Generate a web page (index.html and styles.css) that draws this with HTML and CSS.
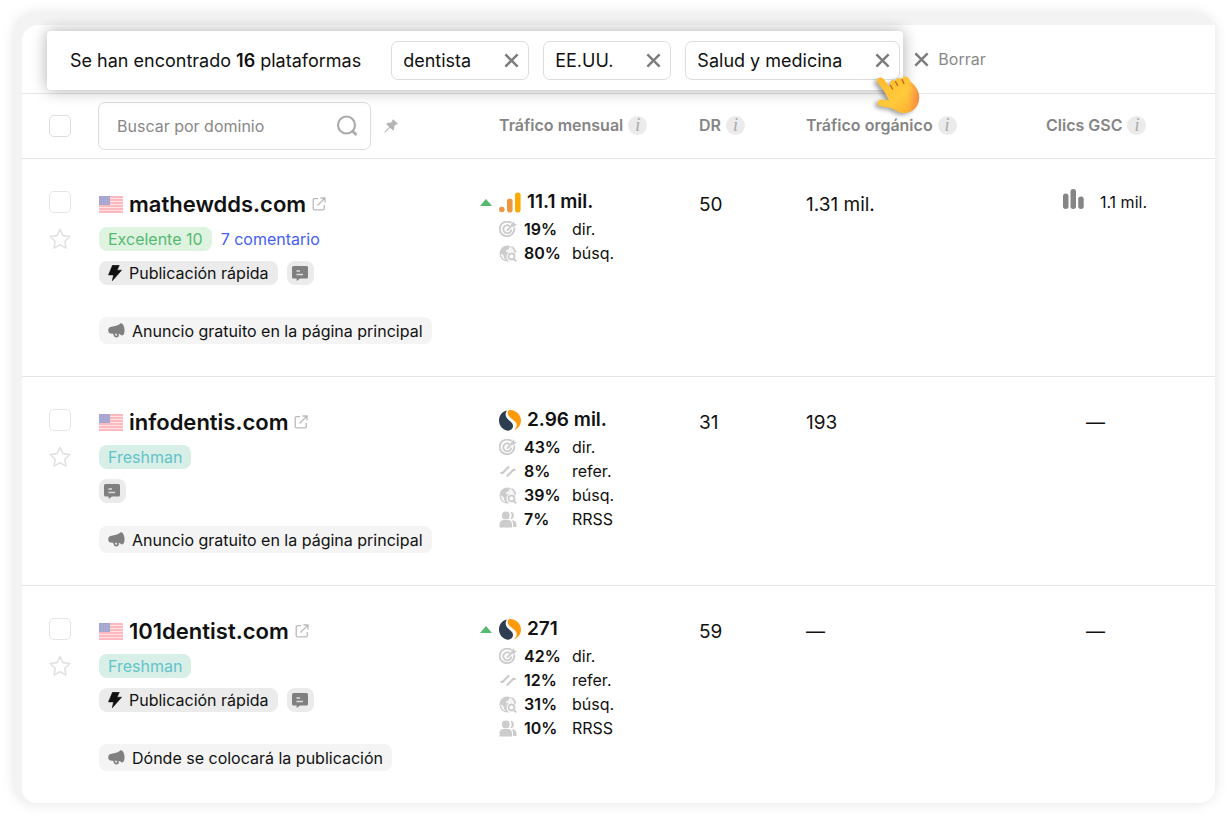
FILE: index.html
```html
<!DOCTYPE html>
<html lang="es">
  <head>
    <meta charset="UTF-8" />
    <meta name="viewport" content="width=device-width, initial-scale=1.0" />
    <title>Plataformas</title>
    <link rel="stylesheet" href="styles.css">
  </head>
  <body>
    <!-- Icon set -->
    <svg class="sprite" aria-hidden="true">
      <symbol id="i-close" viewBox="0 0 18 18">
        <path d="M2.5 2.5l13 13M15.5 2.5l-13 13" fill="none" stroke="currentColor" stroke-width="2.6" />
      </symbol>
      <symbol id="i-search" viewBox="0 0 22 22">
        <circle cx="10.500" cy="10" r="8.500" fill="none" stroke="currentColor" stroke-width="2.1" />
        <path d="M16.500 16l4 4" stroke="currentColor" stroke-width="2.6" />
      </symbol>
      <symbol id="i-pin" viewBox="0 0 14 14">
        <path d="M9.300.2l4.500 4.500c-.5.800-1.200 1.100-2 .9l-1.600 1.700c.4 1.800 0 3.200-1.100 4.300L6 8.700 1 13.700l-.7-.7L5.200 8 2.200 5c1-1.200 2.500-1.600 4.300-1.200L8.300 2.200C8.100 1.400 8.500.7 9.300.2z" fill="currentColor" />
      </symbol>
      <symbol id="i-star" viewBox="0 0 22 22">
        <path d="M11 1.300l2.900 6.300 6.900.9-5 4.800 1.200 6.800-6-3.300-6 3.300 1.200-6.800-5-4.800 6.900-.9z" fill="none" stroke="currentColor" stroke-width="1.600" stroke-linejoin="round" />
      </symbol>
      <symbol id="i-flag" viewBox="0 0 24 17">
        <rect width="24" height="17" fill="#ffb9be" />
        <path d="M0 2.500h24M0 5.500h24M0 8.500h24M0 11.500h24M0 14.500h24" stroke="#fff" stroke-opacity=".6" stroke-width="1" />
        <rect width="11" height="9" fill="#a5a5d0" />
        <path d="M1 2h9M1 4.500h9M1 7h9" stroke="#b9b9dc" stroke-width=".8" stroke-dasharray="1 1" />
      </symbol>
      <symbol id="i-external" viewBox="0 0 14 14">
        <path d="M6 1.700H2.500A1.300 1.300 0 0 0 1.200 3v8.500a1.300 1.300 0 0 0 1.300 1.300H11a1.300 1.300 0 0 0 1.300-1.300V8M8.500 1H13v4.500M13 1L5.500 8.500" fill="none" stroke="currentColor" stroke-width="1.300" />
      </symbol>
      <symbol id="i-bolt" viewBox="0 0 14 16">
        <path d="M4.500.3h6.800L9 5.200h4.600L4.300 15.800l1.300-5.900H.5z" fill="currentColor" stroke="currentColor" stroke-width=".6" stroke-linejoin="round" />
      </symbol>
      <symbol id="i-comment" viewBox="0 0 16 15">
        <path d="M1.500 0h13A1.500 1.500 0 0 1 16 1.500v9.500a1.500 1.500 0 0 1-1.500 1.500H8L4.700 15v-2.500H1.500A1.500 1.500 0 0 1 0 11V1.500A1.500 1.500 0 0 1 1.500 0z" fill="currentColor" />
        <path d="M4.500 5H8M4.500 8.500h6.500" stroke="#dcdcdc" stroke-width="1.300" />
      </symbol>
      <symbol id="i-horn" viewBox="0 0 17 15">
        <path d="M12.500.3c2-.6 3.700 2.400 4 6 .3 3.500-.8 6.200-2.700 6.200-1-.9-2-1.400-3.200-1.700l.3 2.200c-1 1.500-2.900 1.900-4.400 1L5 10.700l-2.500-.2C1.100 10.400.2 9.100.2 7.300.2 5.600 1 4.200 2.400 3.900l4.800-1C9.400 2.500 11 1.600 12.500.3z" fill="currentColor" />
        <path d="M6.700 10.800l1.200 2 1.200-.4-.5-1.700z" fill="#f4f4f4" />
      </symbol>
      <symbol id="i-analytics" viewBox="0 0 22 20">
        <circle cx="2.800" cy="17" r="2.800" fill="#ee9743" />
        <rect x="8" y="6" width="5.600" height="14" rx="2.800" fill="#ee9743" />
        <rect x="16" y="0" width="5.600" height="20" rx="2.800" fill="#fdab03" />
      </symbol>
      <symbol id="i-similar" viewBox="0 0 22 21">
        <path d="M8 .5C3 1.500 0 5.600 0 10.500c0 5.500 4 9.800 9.500 10.300 3-.7 4.700-2.700 4.500-5.200-.3-2.600-2.200-4-4.300-5.600C7.200 8.100 5.200 4.300 8 .5z" fill="#2d3e52" />
        <path d="M10.500 0C16.800-.2 22 4.600 22 10.500c0 4.500-2.900 8.300-7 9.800 2.900-2.500 3.600-5.600 1.500-8.300-1.700-2.200-5-3.500-6.900-6.300C8.100 3.500 8.500.7 10.500 0z" fill="#ff9a0a" />
      </symbol>
      <symbol id="i-target" viewBox="0 0 18 17">
        <path d="M12.500 2.100A7.300 7.300 0 1 0 15.200 6.500M10.800 5.200A4 4 0 1 0 12.300 8.500" fill="none" stroke="currentColor" stroke-width="1.900" />
        <path d="M8.500 9l5-5" stroke="currentColor" stroke-width="1.800" stroke-linecap="round" />
        <path d="M12 3.300L14.800.3l.6 2.300 2.300.6-2.900 2.800-2.300-.3z" fill="currentColor" />
      </symbol>
      <symbol id="i-refer" viewBox="0 0 18 17">
        <path d="M2.300 9.800h1.500L9.500 4M8.500 12.800l5.700-5.900h1.500" fill="none" stroke="currentColor" stroke-width="2.200" stroke-linecap="round" stroke-linejoin="round" />
      </symbol>
      <symbol id="i-globe" viewBox="0 0 18 17">
        <circle cx="8.500" cy="8.500" r="8" fill="currentColor" />
        <path d="M9 1.800l2.300 1.400-.8 2.300-2.500.4-.7 2-2 .4.8 1.800 2.400.6-.8 4.800c-2-.2-3.700-1.600-4.700-3.300l1.700-.7-.5-2.200L1.800 7.800z" fill="#fff" fill-opacity="0" />
        <path d="M1.600 8.200l3.200 2 .2 2.300 1.800 2.800C3.700 14.500 1.800 11.700 1.600 8.200zM10.500 1.500l-.8 2.700-2.400.8-.3 1.900 2.700.6 1.300 1.800 4.400-1.500C15.200 4.800 13.300 2.400 10.500 1.500z" fill="#fff" fill-opacity=".8" />
        <circle cx="12.500" cy="11.700" r="5" fill="#fff" />
        <circle cx="12.500" cy="11.500" r="3" fill="none" stroke="currentColor" stroke-width="1.800" />
        <path d="M14.600 13.700l2.600 2.600" stroke="currentColor" stroke-width="1.900" />
        <path d="M13 1.700a8 8 0 0 1 3.500 5.800" fill="none" stroke="currentColor" stroke-width="1.300" />
      </symbol>
      <symbol id="i-people" viewBox="0 0 18 17">
        <path d="M11.200.7a3.700 3.700 0 0 1 0 7.400 5.500 5.500 0 0 0 0-7.400zM13.500 9.200c2.700.2 4 1.900 4 4.500V16h-3.500v-2.300c0-1.800-.2-3.200-1.100-4.500z" fill="currentColor" />
        <circle cx="6.800" cy="4.400" r="3.900" fill="currentColor" />
        <path d="M4.800 9h4c2.700 0 4.200 1.700 4.200 4.500v3H.5v-3C.5 10.700 2.100 9 4.800 9z" fill="currentColor" />
      </symbol>
      <symbol id="i-bars" viewBox="0 0 21 20">
        <rect x="0" y="4.500" width="5.500" height="15.500" rx="2.700" fill="currentColor" />
        <rect x="7.500" y="0" width="5.500" height="20" rx="2.700" fill="currentColor" />
        <rect x="15.200" y="7.500" width="5.500" height="12.500" rx="2.700" fill="currentColor" />
      </symbol>
      <symbol id="i-up" viewBox="0 0 12 7">
        <path d="M6 0l6 7H0z" fill="#55b972" />
      </symbol>
    </svg>

    <div class="frame">
      <main class="panel">
        <!-- Active filters -->
        <div class="toolbar">
          <div class="found">
            <p>Se han encontrado <strong>16</strong> plataformas</p>
            <div class="chips">
              <span class="chip">dentista
                <button type="button" aria-label="Quitar dentista"><svg class="icon-close"><use href="#i-close" /></svg></button>
              </span>
              <span class="chip">EE.UU.
                <button type="button" aria-label="Quitar EE.UU."><svg class="icon-close"><use href="#i-close" /></svg></button>
              </span>
              <span class="chip">Salud y medicina
                <button type="button" aria-label="Quitar Salud y medicina"><svg class="icon-close"><use href="#i-close" /></svg></button>
              </span>
            </div>
            <svg class="hand" viewBox="0 0 44 38" aria-hidden="true">
              <defs>
                <linearGradient id="skin" x1="0" y1="0" x2="1" y2="1">
                  <stop offset="0" stop-color="#ffb92c" />
                  <stop offset=".55" stop-color="#ffca3c" />
                  <stop offset="1" stop-color="#fba52d" />
                </linearGradient>
                <linearGradient id="edge" x1="0" y1="0" x2="1" y2="0">
                  <stop offset=".6" stop-color="#f5734e" stop-opacity="0" />
                  <stop offset="1" stop-color="#f5734e" stop-opacity=".65" />
                </linearGradient>
              </defs>
              <path d="M2.200 2.200C4 .8 6.300 1.300 7.800 3.200L14.500 11.500C13.500 7 14 4.500 16.500 4c1.300-.2 2.300.5 3 1.500.3-2.300 1.400-3.500 3.300-3.600 1.500-.1 2.600.6 3.300 1.700C26.400 1.500 27.400.7 29 .6c3-.2 4.200 2.100 5.500 5C39 9 43 15 43.200 20.500 43.600 29.500 37.500 36.700 29 37c-5.500.2-9.700-2.700-14-5L5.500 30.500c-2.800-.3-4-1.900-3.700-4 .3-2 1.900-3.200 4.200-3.100l7 .8L8 15 2 7C.6 5 .7 3.300 2.200 2.200z" fill="url(#skin)" />
              <path d="M22 2c3.500-2 9.500-2.500 12.500 3.600C39 9 43 15 43.200 20.500 43.600 29.500 37.500 36.700 29 37c-5.500.2-9.700-2.700-14-5C25 30 32 20 22 2z" fill="url(#edge)" />
              <path d="M14.500 9.500l2 3.500M19.500 5.500l2 4M26.100 3.600l1.800 4" fill="none" stroke="#c66b16" stroke-width="1.400" stroke-linecap="round" />
            </svg>
          </div>
          <button type="button" class="clear"><svg class="icon-close"><use href="#i-close" /></svg>Borrar</button>
        </div>

        <!-- Platforms -->
        <table>
          <colgroup>
            <col class="col-check">
            <col class="col-site">
            <col class="col-traffic">
            <col class="col-dr">
            <col class="col-organic">
            <col>
          </colgroup>
          <thead>
            <tr>
              <th><input type="checkbox" aria-label="Seleccionar todo"></th>
              <th>
                <div class="search-cell">
                  <div class="search">
                    <input type="text" placeholder="Buscar por dominio" aria-label="Buscar por dominio">
                    <svg class="icon-search"><use href="#i-search" /></svg>
                  </div>
                  <svg class="icon-pin"><use href="#i-pin" /></svg>
                </div>
              </th>
              <th class="th-traffic"><div class="heading">Tráfico mensual <span class="info">i</span></div></th>
              <th><div class="heading">DR <span class="info">i</span></div></th>
              <th><div class="heading">Tráfico orgánico <span class="info">i</span></div></th>
              <th><div class="heading">Clics GSC <span class="info">i</span></div></th>
            </tr>
          </thead>
          <tbody>
            <tr>
              <td>
                <div class="select">
                  <input type="checkbox" aria-label="Seleccionar mathewdds.com">
                  <button type="button" aria-label="Favorito"><svg class="icon-star"><use href="#i-star" /></svg></button>
                </div>
              </td>
              <td class="site">
                <div class="domain">
                  <svg class="icon-flag"><use href="#i-flag" /></svg>
                  <a href="#">mathewdds.com</a>
                  <svg class="icon-external"><use href="#i-external" /></svg>
                </div>
                <div class="tags">
                  <span class="tag excellent">Excelente 10</span>
                  <a href="#" class="reviews">7 comentario</a>
                </div>
                <div class="tags">
                  <span class="tag fast"><svg class="icon-bolt"><use href="#i-bolt" /></svg>Publicación rápida</span>
                  <span class="tag note"><svg class="icon-comment"><use href="#i-comment" /></svg></span>
                </div>
                <div class="promo"><svg class="icon-horn"><use href="#i-horn" /></svg>Anuncio gratuito en la página principal</div>
              </td>
              <td class="traffic">
                <div class="total">
                  <span class="trend"><svg class="icon-up"><use href="#i-up" /></svg></span>
                  <svg class="icon-source"><use href="#i-analytics" /></svg>
                  <strong>11.1 mil.</strong>
                </div>
                <ul>
                  <li><svg><use href="#i-target" /></svg><b>19%</b><span>dir.</span></li>
                  <li><svg><use href="#i-globe" /></svg><b>80%</b><span>búsq.</span></li>
                </ul>
              </td>
              <td class="number">50</td>
              <td class="number">1.31 mil.</td>
              <td class="clicks"><div class="clicks-value"><svg class="icon-bars"><use href="#i-bars" /></svg>1.1 mil.</div></td>
            </tr>
            <tr>
              <td>
                <div class="select">
                  <input type="checkbox" aria-label="Seleccionar infodentis.com">
                  <button type="button" aria-label="Favorito"><svg class="icon-star"><use href="#i-star" /></svg></button>
                </div>
              </td>
              <td class="site">
                <div class="domain">
                  <svg class="icon-flag"><use href="#i-flag" /></svg>
                  <a href="#">infodentis.com</a>
                  <svg class="icon-external"><use href="#i-external" /></svg>
                </div>
                <div class="tags"><span class="tag freshman">Freshman</span></div>
                <div class="tags">
                  <span class="tag note"><svg class="icon-comment"><use href="#i-comment" /></svg></span>
                </div>
                <div class="promo"><svg class="icon-horn"><use href="#i-horn" /></svg>Anuncio gratuito en la página principal</div>
              </td>
              <td class="traffic">
                <div class="total">
                  <span class="trend"></span>
                  <svg class="icon-source"><use href="#i-similar" /></svg>
                  <strong>2.96 mil.</strong>
                </div>
                <ul>
                  <li><svg><use href="#i-target" /></svg><b>43%</b><span>dir.</span></li>
                  <li><svg><use href="#i-refer" /></svg><b>8%</b><span>refer.</span></li>
                  <li><svg><use href="#i-globe" /></svg><b>39%</b><span>búsq.</span></li>
                  <li><svg><use href="#i-people" /></svg><b>7%</b><span>RRSS</span></li>
                </ul>
              </td>
              <td class="number">31</td>
              <td class="number">193</td>
              <td class="number"><div class="no-clicks">—</div></td>
            </tr>
            <tr>
              <td>
                <div class="select">
                  <input type="checkbox" aria-label="Seleccionar 101dentist.com">
                  <button type="button" aria-label="Favorito"><svg class="icon-star"><use href="#i-star" /></svg></button>
                </div>
              </td>
              <td class="site">
                <div class="domain">
                  <svg class="icon-flag"><use href="#i-flag" /></svg>
                  <a href="#">101dentist.com</a>
                  <svg class="icon-external"><use href="#i-external" /></svg>
                </div>
                <div class="tags"><span class="tag freshman">Freshman</span></div>
                <div class="tags">
                  <span class="tag fast"><svg class="icon-bolt"><use href="#i-bolt" /></svg>Publicación rápida</span>
                  <span class="tag note"><svg class="icon-comment"><use href="#i-comment" /></svg></span>
                </div>
                <div class="promo"><svg class="icon-horn"><use href="#i-horn" /></svg>Dónde se colocará la publicación</div>
              </td>
              <td class="traffic">
                <div class="total">
                  <span class="trend"><svg class="icon-up"><use href="#i-up" /></svg></span>
                  <svg class="icon-source"><use href="#i-similar" /></svg>
                  <strong>271</strong>
                </div>
                <ul>
                  <li><svg><use href="#i-target" /></svg><b>42%</b><span>dir.</span></li>
                  <li><svg><use href="#i-refer" /></svg><b>12%</b><span>refer.</span></li>
                  <li><svg><use href="#i-globe" /></svg><b>31%</b><span>búsq.</span></li>
                  <li><svg><use href="#i-people" /></svg><b>10%</b><span>RRSS</span></li>
                </ul>
              </td>
              <td class="number">59</td>
              <td class="number">—</td>
              <td class="number"><div class="no-clicks">—</div></td>
            </tr>
          </tbody>
        </table>
      </main>
    </div>
  </body>
</html>
```
FILE: styles.css
```css
* {
  margin: 0;
  padding: 0;
  box-sizing: border-box;
}

body {
  background: #fff;
  color: #111;
  font-family: Inter, "Liberation Sans", sans-serif;
  font-size: 16px;
  line-height: 24px;
  padding: 14px 15px;
}

button {
  background: none;
  border: none;
  color: inherit;
  font: inherit;
  cursor: pointer;
}

svg {
  display: block;
  flex: none;
}

.sprite {
  position: absolute;
  width: 0;
  height: 0;
}

.frame {
  background: #f3f3f3;
  border-radius: 20px;
  padding: 11px 0 0 7px;
  box-shadow: 0 0 14px rgba(0, 0, 0, 0.12);
}

.panel {
  background: #fff;
  border-radius: 16px 0 16px 14px;
}

/* Toolbar */
.toolbar {
  display: flex;
  align-items: center;
  gap: 10px;
  border-bottom: 1px solid #e5e5e5;
}

.found {
  position: relative;
  display: flex;
  align-items: center;
  gap: 30px;
  margin: 6px 0 3px 25px;
  padding: 10px 3px 10px 23px;
  background: #fff;
  border-radius: 4px;
  box-shadow: 0 0 16px rgba(0, 0, 0, 0.32);
  font-size: 18px;
  white-space: nowrap;
}

.found strong {
  font-weight: 600;
}

.chips {
  display: flex;
  gap: 14px;
}

.chip {
  display: flex;
  align-items: center;
  gap: 32px;
  height: 39px;
  padding: 0 8px 0 11px;
  border: 1px solid #ddd;
  border-radius: 7px;
}

.icon-close {
  width: 17px;
  height: 17px;
  color: #7c7c7c;
}

.clear {
  display: flex;
  align-items: center;
  gap: 8px;
  color: #888;
}

.hand {
  position: absolute;
  right: -17px;
  bottom: -24px;
  width: 44px;
  height: 38px;
  filter: drop-shadow(-3px 2px 2px rgba(0, 0, 0, 0.35));
}

/* Table */
table {
  width: 100%;
  table-layout: fixed;
  border-collapse: separate;
  border-spacing: 0;
}

.col-check {
  width: 76px;
}

.col-site {
  width: 382px;
}

.col-traffic {
  width: 219px;
}

.col-dr {
  width: 107px;
}

.col-organic {
  width: 240px;
}

th,
td {
  text-align: left;
  border-bottom: 1px solid #e5e5e5;
}

tbody tr:last-child td {
  border-bottom: none;
}

th {
  height: 65px;
  vertical-align: middle;
}

td {
  vertical-align: top;
}

th:first-child,
td:first-child {
  padding-left: 27px;
}

input[type="checkbox"] {
  appearance: none;
  display: block;
  width: 22px;
  height: 22px;
  border: 1px solid #ddd;
  border-radius: 5px;
  background: #fff;
}

tbody input[type="checkbox"] {
  border-color: #e5e5e5;
}

.search-cell {
  display: flex;
  align-items: center;
  gap: 13px;
}

.search {
  display: flex;
  align-items: center;
  width: 273px;
  height: 48px;
  padding: 0 12px 0 18px;
  border: 1px solid #ddd;
  border-radius: 7px;
}

.search input {
  flex: 1;
  min-width: 0;
  border: none;
  outline: none;
  background: none;
  font: inherit;
  font-weight: 400;
}

.search input::placeholder {
  color: #888;
}

.icon-search {
  width: 22px;
  height: 22px;
  color: #aaa;
}

.icon-pin {
  width: 14px;
  height: 14px;
  color: #b5b5b5;
}

.heading {
  display: flex;
  align-items: center;
  gap: 5px;
  padding-bottom: 2px;
  color: #858585;
  font-weight: 600;
}

.th-traffic {
  padding-left: 19px;
}

.info {
  width: 19px;
  height: 19px;
  border-radius: 50%;
  background: #ebebeb;
  color: #aaa;
  font: italic 18px/19px "Liberation Serif", serif;
  text-align: center;
}

.select {
  display: flex;
  flex-direction: column;
  gap: 15px;
  width: 22px;
  padding-top: 32px;
}

.icon-star {
  width: 22px;
  height: 22px;
  color: #e2e2e2;
}

.site {
  padding: 32px 0 32px 1px;
}

.domain {
  display: flex;
  align-items: center;
  gap: 6px;
  height: 26px;
  font-size: 22px;
  font-weight: 600;
}

.domain a {
  color: #111;
  text-decoration: none;
}

.icon-flag {
  width: 24px;
  height: 17px;
}

.icon-external {
  width: 14px;
  height: 14px;
  color: #bbb;
}

.tags {
  display: flex;
  align-items: flex-start;
  gap: 9px;
  margin-top: 10px;
}

.tag {
  display: flex;
  align-items: center;
  gap: 7px;
  height: 24px;
  padding: 0 9px;
  border-radius: 8px;
}

.excellent {
  background: #dff3e1;
  color: #55b972;
}

.freshman {
  background: #d8efe7;
  color: #62c3c9;
}

.reviews {
  color: #4460f5;
  text-decoration: none;
}

.fast {
  margin-bottom: 9px;
  background: #ebebeb;
}

.note {
  width: 27px;
  padding: 0 5px;
  background: #ebebeb;
}

.icon-bolt {
  width: 14px;
  height: 16px;
}

.icon-comment {
  width: 16px;
  height: 15px;
  color: #808080;
}

.promo {
  display: flex;
  align-items: center;
  gap: 7px;
  width: fit-content;
  height: 27px;
  margin-top: 23px;
  padding: 0 9px;
  border-radius: 8px;
  background: #f4f4f4;
}

.icon-horn {
  width: 17px;
  height: 15px;
  color: #808080;
}

.traffic {
  padding-top: 31px;
}

.total {
  display: flex;
  align-items: center;
  margin-bottom: 3px;
  font-size: 19px;
}

.total strong {
  font-weight: 600;
}

.trend {
  width: 19px;
}

.icon-up {
  width: 12px;
  height: 7px;
}

.icon-source {
  width: 22px;
  height: 21px;
  margin-right: 6px;
}

.traffic ul {
  padding-left: 19px;
  list-style: none;
}

.traffic li {
  display: grid;
  grid-template-columns: 25px 48px auto;
  align-items: center;
}

.traffic li svg {
  width: 18px;
  height: 17px;
  color: #ccc;
}

.traffic b {
  font-weight: 600;
}

.number {
  padding-top: 34px;
  font-size: 19px;
}

.clicks {
  padding-top: 30px;
}

.clicks-value {
  display: flex;
  align-items: flex-end;
  justify-content: flex-end;
  gap: 16px;
  width: 101px;
}

.no-clicks {
  width: 99px;
  text-align: center;
}

.icon-bars {
  width: 21px;
  height: 20px;
  margin-bottom: 5px;
  color: #858585;
}
```
